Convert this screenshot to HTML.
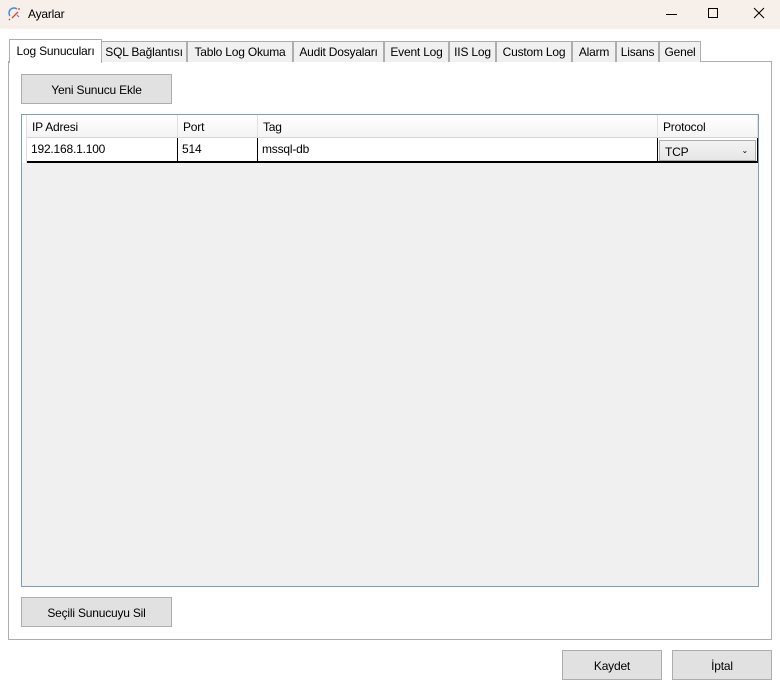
<!DOCTYPE html>
<html><head><meta charset="utf-8"><style>
*{box-sizing:border-box;margin:0;padding:0}
body{width:780px;height:689px;background:#fff;font-family:"Liberation Sans",sans-serif;font-size:12px;color:#000;position:relative;overflow:hidden;letter-spacing:-0.2px}
.a{position:absolute}
.title{left:0;top:0;width:780px;height:29px;background:#f6efea}
.tab{position:absolute;top:41px;height:21px;background:#f0f0f0;border:1px solid #adadad;border-bottom:none;text-align:center;line-height:20px;white-space:nowrap;overflow:hidden}
.btn{position:absolute;background:#e1e1e1;border:1px solid #adadad;text-align:center;white-space:nowrap}
.hd{position:absolute;top:115px;height:23px;line-height:25px;padding-left:5px;background:linear-gradient(#fff,#f4f4f4);border-right:1px solid #e0e0e0;border-bottom:1px solid #d5d5d5}
.cl{position:absolute;top:138px;height:25px;line-height:23px;padding-left:4px;background:#fff;border-right:1px solid #000;border-bottom:2px solid #000}
</style></head><body>
<div class="a title"></div>
<svg class="a" style="left:8px;top:7px" width="14" height="14" viewBox="0 0 14 14"><path d="M2 9 A5 5 0 0 1 9 2" stroke="#3b8de0" stroke-width="1.5" fill="none"/><path d="M4 11 L10 5" stroke="#e0452b" stroke-width="1.3"/><path d="M11 1 L11 3" stroke="#e0452b" stroke-width="1.3"/><path d="M1 12 L2 13" stroke="#e0452b" stroke-width="1.3"/><path d="M9 8 L11 10" stroke="#3b8de0" stroke-width="1.2"/></svg>
<div class="a" style="left:28px;top:7px;font-size:12px">Ayarlar</div>
<div class="a" style="left:666px;top:14px;width:11px;height:1px;background:#000"></div>
<div class="a" style="left:708px;top:8px;width:10px;height:10px;border:1px solid #000"></div>
<svg class="a" style="left:753px;top:7px" width="12" height="12"><path d="M1 1L11 11M11 1L1 11" stroke="#000" stroke-width="1"/></svg>

<div class="a" style="left:8px;top:61px;width:764px;height:579px;border:1px solid #adadad;background:#fff"></div>
<div class="tab" style="left:9px;top:39px;width:93px;height:24px;background:#fff;line-height:22px;z-index:2">Log Sunucuları</div>
<div class="tab" style="left:101px;width:86px">SQL Bağlantısı</div>
<div class="tab" style="left:187px;width:106px">Tablo Log Okuma</div>
<div class="tab" style="left:293px;width:91px">Audit Dosyaları</div>
<div class="tab" style="left:384px;width:65px">Event Log</div>
<div class="tab" style="left:449px;width:47px">IIS Log</div>
<div class="tab" style="left:496px;width:76px">Custom Log</div>
<div class="tab" style="left:572px;width:44px">Alarm</div>
<div class="tab" style="left:616px;width:43px">Lisans</div>
<div class="tab" style="left:659px;width:42px">Genel</div>

<div class="btn" style="left:21px;top:74px;width:151px;height:30px;line-height:30px">Yeni Sunucu Ekle</div>

<div class="a" style="left:21px;top:114px;width:738px;height:473px;border:1px solid #7f9db9;background:#f0f0f0"></div>
<div class="a" style="left:22px;top:115px;width:5px;height:48px;background:#fff;border-right:1px solid #e0e0e0"></div>
<div class="hd" style="left:27px;width:151px">IP Adresi</div>
<div class="hd" style="left:178px;width:80px">Port</div>
<div class="hd" style="left:258px;width:400px">Tag</div>
<div class="hd" style="left:658px;width:100px">Protocol</div>
<div class="cl" style="left:27px;width:151px">192.168.1.100</div>
<div class="cl" style="left:178px;width:80px">514</div>
<div class="cl" style="left:258px;width:400px">mssql-db</div>
<div class="cl" style="left:658px;width:100px;padding:0;background:#fff"></div>
<div class="a" style="left:659px;top:140px;width:97px;height:21px;background:linear-gradient(#f3f3f3,#e6e6e6);border:1px solid #adadad;line-height:22px;padding-left:5px">TCP<span style="position:absolute;right:7px;top:-1px;font-size:8px">&#8964;</span></div>

<div class="btn" style="left:21px;top:597px;width:151px;height:30px;line-height:30px">Seçili Sunucuyu Sil</div>
<div class="btn" style="left:562px;top:650px;width:100px;height:30px;line-height:30px">Kaydet</div>
<div class="btn" style="left:672px;top:650px;width:100px;height:30px;line-height:30px">İptal</div>
</body></html>
